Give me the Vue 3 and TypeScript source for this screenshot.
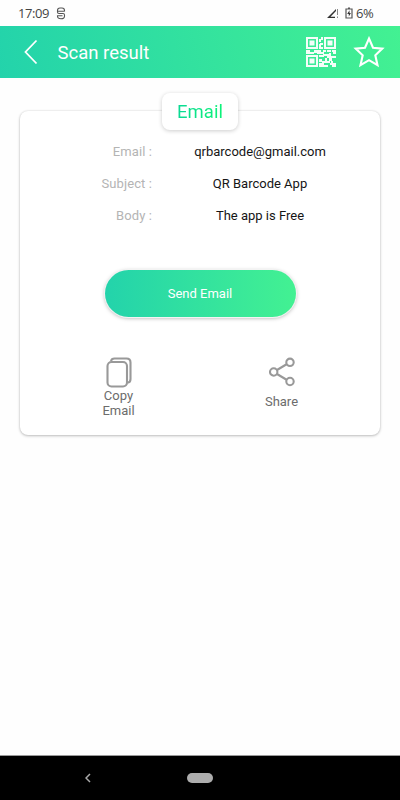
<script setup lang="ts">
interface Field {
  label: string
  value: string
}

const fields: Field[] = [
  { label: 'Email :', value: 'qrbarcode@gmail.com' },
  { label: 'Subject :', value: 'QR Barcode App' },
  { label: 'Body :', value: 'The app is Free' },
]
</script>

<template>
  <div class="screen">
    <div class="status">
      <span class="time">17:09</span>
      <svg class="notice" width="10" height="13" viewBox="0 0 10 13">
        <path d="M8.5 4.5V3.5Q8.5 1 6 1H4Q1.5 1 1.5 3.5V5Q1.5 6.5 3 6.5H7Q8.5 6.5 8.5 8V9Q8.5 11.8 5 11.8T1.5 9.3V8.8H6.5M1.5 4.3H8.5" />
      </svg>
      <span class="spacer"></span>
      <svg class="signal" width="12" height="12" viewBox="0 0 12 12">
        <path class="wedge" d="M0 11L9 2V4L3.5 9.7H8V11Z" />
        <path class="bar" d="M10.5 2V8M10.5 9.5V11" />
      </svg>
      <svg class="battery" width="8" height="12" viewBox="0 0 8 12">
        <path class="case" d="M1 2H7V11H1ZM3 1H5" />
        <path class="bolt" d="M4.5 3.3L2.2 7H3.8V9.5L5.9 6H4.5Z" />
      </svg>
      <span class="percent">6%</span>
    </div>

    <header class="bar-top">
      <svg class="back" width="14" height="26" viewBox="0 0 14 26">
        <path d="M12.5 1.5L1.5 13L12.5 24.5" />
      </svg>
      <h1>Scan result</h1>
      <svg class="qr" width="30" height="30" viewBox="0 0 30 30">
        <path class="ring" d="M1 1H11V11H1ZM19 1H29V11H19ZM1 19H11V29H1Z" />
        <path d="M3.5 3.5H8.5V8.5H3.5ZM21.5 3.5H26.5V8.5H21.5ZM3.5 21.5H8.5V26.5H3.5Z" />
        <path d="M15 0H17V3H15V5H13V2H15ZM14 6H17V8H15V10H17V12H13V7H14ZM0 13H4V15H8V13H15V15H17V13H20V15H18V17H11V16H8V17H0ZM21 13H25V15H21ZM26 13H30V17H27V15H26ZM13 18H17V17H23V19H18V20H13ZM23 16H25V19H30V21H26V24H23V21H21V19H23ZM13 22H16V24H19V21H21V24H24V26H18V28H13V26H16V25H13ZM25 24H27V26H30V30H26V28H24V26H25ZM13 28H22V30H13Z" />
      </svg>
      <svg class="star" width="32" height="32" viewBox="0 0 32 32">
        <path d="M16 2.5L20 11.7L29.3 12.6L22.3 19.3L24.5 29.2L16 24.2L7.5 29.2L9.7 19.3L2.7 12.6L12 11.7Z" />
      </svg>
    </header>

    <main>
      <section class="card">
        <h2 class="tab"><span>Email</span></h2>
        <dl>
          <div v-for="field in fields" :key="field.label" class="row">
            <dt>{{ field.label }}</dt>
            <dd>{{ field.value }}</dd>
          </div>
        </dl>
        <button class="send" type="button">Send Email</button>
        <div class="actions">
          <div class="action copy">
            <svg width="26" height="31" viewBox="0 0 26 31">
              <path d="M5 4Q5.5 1.5 8.5 1.5H20.5Q24.5 1.5 24.5 5.5V22Q24.5 25.5 21.5 25.7" />
              <rect x="1.5" y="5" width="19.5" height="24.5" rx="4" />
            </svg>
            <span>Copy<br />Email</span>
          </div>
          <div class="action share">
            <svg width="26" height="30" viewBox="0 0 26 30">
              <path d="M8 13L18 7M8 17L18 23" />
              <circle cx="4.7" cy="15" r="3.7" />
              <circle cx="21" cy="5.3" r="3.7" />
              <circle cx="21" cy="24.5" r="3.7" />
            </svg>
            <span>Share</span>
          </div>
        </div>
      </section>
    </main>

    <nav>
      <span class="side back-side">
        <svg width="6" height="10" viewBox="0 0 6 10"><path d="M5 1L1 5L5 9" /></svg>
      </span>
      <span class="pill"></span>
      <span class="side"></span>
    </nav>
  </div>
</template>

<style>
body {
  margin: 0;
  background: #fefefe;
}
</style>

<style scoped>
.screen {
  width: 400px;
  height: 800px;
  display: flex;
  flex-direction: column;
  overflow: hidden;
  background: #fefefe;
  font-family: Roboto, sans-serif;
}
svg {
  display: block;
  flex: none;
  fill: none;
}
.status {
  height: 26px;
  box-sizing: border-box;
  padding: 0 26px 0 18px;
  display: flex;
  align-items: center;
  color: #444;
  font: 13px/26px "Open Sans", sans-serif;
}
.time {
  width: 38px;
  letter-spacing: -0.4px;
}
.notice path {
  stroke: #555;
  stroke-width: 1.1;
}
.spacer {
  flex: 1;
}
.wedge {
  fill: #333;
}
.bar {
  stroke: #888;
}
.battery {
  margin: 0 3px 0 6px;
}
.case {
  stroke: #555;
  stroke-width: 1.2;
}
.bolt {
  fill: #333;
}
.percent {
  width: 18px;
  letter-spacing: -0.4px;
  white-space: nowrap;
}
.bar-top {
  height: 52px;
  box-sizing: border-box;
  padding: 0 15px 0 24px;
  display: flex;
  align-items: center;
  background: linear-gradient(75deg, #23d3ab, #43f192);
}
.back path {
  stroke: #fff;
  stroke-width: 1.8;
}
h1 {
  flex: 1;
  margin: 2px 0 0 19.5px;
  color: #fff;
  font-size: 18.5px;
  font-weight: 400;
  letter-spacing: 0;
}
.qr {
  fill: #fff;
  opacity: 0.95;
}
.ring {
  fill: none;
  stroke: #fff;
  stroke-width: 2;
}
.star {
  margin-left: 17px;
}
.star path {
  stroke: #fff;
  stroke-width: 2.1;
}
main {
  flex: 1;
  padding: 33px 20px 0;
}
.card {
  height: 324px;
  display: flex;
  flex-direction: column;
  align-items: center;
  border-radius: 8px;
  background: #fff;
  box-shadow: 0 1px 3px rgba(0, 0, 0, 0.24), 0 0 2px rgba(0, 0, 0, 0.12);
}
.tab {
  width: 76px;
  height: 37px;
  margin: -18px 0 0;
  border-radius: 8px;
  background: #fff;
  box-shadow: 0 1px 4px rgba(0, 0, 0, 0.2);
  text-align: center;
  font-size: 18.5px;
  font-weight: 400;
  line-height: 39px;
}
.tab span {
  background: linear-gradient(90deg, #0bd995, #0cf379);
  background-clip: text;
  color: transparent;
}
dl {
  width: 100%;
  margin: 5px 0 0;
}
.row {
  height: 32px;
  display: flex;
  align-items: center;
  font-size: 13px;
}
dt {
  width: 132px;
  color: #b4b4b4;
  text-align: right;
  letter-spacing: 0.1px;
}
dd {
  width: 160px;
  margin: 0 0 0 28px;
  color: #151515;
  text-align: center;
  white-space: nowrap;
}
.send {
  width: 191px;
  height: 47px;
  margin: 39px 0 0;
  padding: 0;
  border: 0;
  border-radius: 24px;
  background: linear-gradient(90deg, #23d3ab, #43f192);
  box-shadow: 0 0 0 1px #f3f3f3, 0 1px 4px rgba(0, 0, 0, 0.35);
  color: #fff;
  font: 13px/48px Roboto, sans-serif;
}
.actions {
  width: 326px;
  margin-top: 40px;
  display: grid;
  grid-template-columns: 1fr 1fr;
  color: #6c6c6c;
  font-size: 13px;
  line-height: 15px;
  text-align: center;
}
.action {
  display: flex;
  flex-direction: column;
  align-items: center;
}
.action path,
.action rect,
.action circle {
  stroke: #999;
  stroke-width: 2.1;
}
.share span {
  margin-top: 7px;
}
nav {
  height: 45px;
  box-sizing: border-box;
  border-top: 1px solid #999;
  display: flex;
  align-items: center;
  background: #000;
}
.side {
  width: 187px;
  display: flex;
  justify-content: center;
}
.back-side {
  box-sizing: border-box;
  padding-right: 11px;
}
.side path {
  stroke: #aaa;
  stroke-width: 1.5;
}
.pill {
  width: 26px;
  height: 10px;
  border-radius: 5px;
  background: #adadad;
}
</style>
